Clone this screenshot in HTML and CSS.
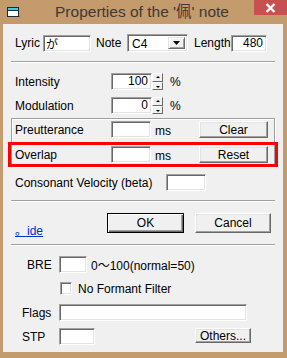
FILE: index.html
```html
<!DOCTYPE html>
<html lang="en">
<head>
  <meta charset="UTF-8" />
  <title>Properties of the note</title>
  <link rel="stylesheet" href="styles.css">
</head>
<body>
  <div class="window">
    <div class="titlebar">
      <svg class="app-icon" width="13" height="11" viewBox="0 0 13 11">
        <rect x="0.5" y="0.5" width="11" height="9" fill="#fff" stroke="#1a2a3a"/>
        <rect x="1" y="1" width="10" height="2.5" fill="#3fd0e0"/>
        <line x1="1" y1="3.5" x2="11" y2="3.5" stroke="#1a2a3a"/>
        <rect x="12" y="9" width="1" height="1" fill="#6a7a8a"/>
      </svg>
      <div class="title">Properties of the '佩' note</div>
      <div class="close">
        <svg width="11" height="10" viewBox="0 0 11 10">
          <path d="M1.5 1 L9.5 9 M9.5 1 L1.5 9" stroke="#fff" stroke-width="2.4"/>
        </svg>
      </div>
    </div>

    <div class="client">
      <div class="row row-top">
        <span class="lbl w-lyric">Lyric</span>
        <span class="field w48 lyric">が</span>
        <span class="lbl w-note">Note</span>
        <span class="combo">
          <span class="combo-text">C4</span>
          <span class="combo-btn">
            <svg width="7" height="4" viewBox="0 0 7 4"><path d="M0 0 H7 L3.5 4 Z" fill="#000"/></svg>
          </span>
        </span>
        <span class="lbl w-length">Length</span>
        <span class="field w36 num">480</span>
      </div>

      <div class="sep sep-a"></div>

      <div class="row row-int">
        <span class="lbl w96">Intensity</span>
        <span class="field w41 num">100</span>
        <span class="spin"><span class="spin-up"></span><span class="spin-down"></span></span>
        <span class="unit pct">%</span>
      </div>
      <div class="row row-mod">
        <span class="lbl w96">Modulation</span>
        <span class="field w41 num">0</span>
        <span class="spin"><span class="spin-up"></span><span class="spin-down"></span></span>
        <span class="unit pct">%</span>
      </div>

      <div class="group">
        <div class="row row-pre">
          <span class="lbl w96">Preutterance</span>
          <span class="field w40"></span>
          <span class="unit ms">ms</span>
          <span class="btn w69">Clear</span>
        </div>
        <div class="row row-ovl highlight">
          <span class="lbl w96">Overlap</span>
          <span class="field w40"></span>
          <span class="unit ms">ms</span>
          <span class="btn w69">Reset</span>
        </div>
      </div>

      <div class="row row-cons">
        <span class="lbl w151">Consonant Velocity (beta)</span>
        <span class="field w40"></span>
      </div>

      <div class="sep sep-b"></div>

      <div class="row row-actions">
        <a class="link" href="#">。ide</a>
        <span class="btn btn-lg default">OK</span>
        <span class="btn btn-lg cancel">Cancel</span>
      </div>

      <div class="sep sep-c"></div>

      <div class="extras">
        <span class="lbl ex-bre">BRE</span>
        <div class="ex-line">
          <span class="field w28"></span>
          <span class="hint">0〜100(normal=50)</span>
        </div>

        <span></span>
        <div class="ex-line ex-check">
          <span class="checkbox"></span>
          <span class="lbl">No Formant Filter</span>
        </div>

        <span class="lbl ex-flags">Flags</span>
        <div class="ex-line">
          <span class="field w188"></span>
        </div>

        <span class="lbl ex-stp">STP</span>
        <div class="ex-line ex-stp-line">
          <span class="field w36"></span>
          <span class="btn btn-sm">Others...</span>
        </div>
      </div>
    </div>
  </div>
</body>
</html>
```

FILE: styles.css
```css
* {
  box-sizing: border-box;
}
body {
  margin: 0;
  font-family: "Liberation Sans", Arial, "Noto Sans CJK JP", sans-serif;
  font-size: 12px;
  color: #000;
  background: #c49b6c;
}
.window {
  width: 287px;
  height: 358px;
  background: #c49b6c;
  padding: 0 4px 0 3px;
  display: flex;
  flex-direction: column;
}
.titlebar {
  height: 24px;
  margin: 0 -4px 0 -3px;
  display: grid;
  grid-template-columns: 1fr auto 1fr;
  align-items: start;
}
.app-icon {
  margin: 7px 0 0 7px;
}
.title {
  font-size: 15.5px;
  color: #3a3a3a;
  line-height: 24px;
  margin-left: -3px;
}
.close {
  justify-self: end;
  width: 33px;
  height: 15px;
  background: #c75050;
  display: flex;
  align-items: center;
  justify-content: center;
}
.client {
  background: #f0f0f0;
  height: 328px;
  padding: 10px 8px 0 8px;
}

/* rows */
.row {
  display: flex;
  align-items: center;
  height: 17px;
  padding-left: 4px;
}
.row-top {
  height: 18px;
}
.lbl {
  white-space: nowrap;
}
.w-lyric { width: 28px; }
.w-note { width: 31px; margin-left: 5px; }
.w-length { width: 37px; margin-left: 6px; }
.w96 { width: 96px; }
.w151 { width: 151px; }

/* sunken field */
.field {
  display: inline-block;
  height: 17px;
  background: #fff;
  border: 1px solid;
  border-color: #a0a0a0 #fff #fff #a0a0a0;
  box-shadow: inset 1px 1px #696969, inset -1px -1px #e3e3e3;
  padding: 0 3px;
  line-height: 15px;
  font-size: 12px;
}
.lyric {
  font-family: "Noto Sans CJK JP", sans-serif;
  padding-left: 2px;
}
.num {
  text-align: right;
}
.w48 { width: 48px; }
.w41 { width: 41px; }
.w40 { width: 40px; }
.w36 { width: 36px; }
.w28 { width: 28px; }
.w188 { width: 188px; }

.combo {
  display: flex;
  width: 61px;
  height: 18px;
  background: #fff;
  border: 1px solid;
  border-color: #a0a0a0 #fff #fff #a0a0a0;
  box-shadow: inset 1px 1px #696969, inset -1px -1px #e3e3e3;
  padding: 2px;
}
.combo-text {
  flex: 1;
  line-height: 14px;
  padding-left: 2px;
}
.combo-btn {
  width: 17px;
  background: #f0f0f0;
  border: 1px solid;
  border-color: #e3e3e3 #696969 #696969 #e3e3e3;
  box-shadow: inset 1px 1px #fff, inset -1px -1px #a0a0a0;
  display: flex;
  align-items: center;
  justify-content: center;
}

/* spinner */
.spin {
  display: flex;
  flex-direction: column;
  width: 11px;
  height: 17px;
}
.spin-up, .spin-down {
  flex: 1;
  background: #f0f0f0;
  border: 1px solid;
  border-color: #fff #696969 #696969 #fff;
  position: relative;
}
.spin-up::after, .spin-down::after {
  content: "";
  position: absolute;
  left: 3px;
  border-left: 2px solid transparent;
  border-right: 2px solid transparent;
}
.spin-up::after {
  top: 2px;
  border-bottom: 2px solid #000;
}
.spin-down::after {
  top: 3px;
  border-top: 2px solid #000;
}
.unit.pct {
  margin-left: 7px;
}
.unit.ms {
  margin-left: 4px;
  padding-top: 3px;
}

/* separators */
.sep {
  height: 2px;
  border-top: 1px solid #a0a0a0;
  border-bottom: 1px solid #fff;
}
.sep-a { margin-top: 9px; }
.sep-b { margin-top: 9px; }
.sep-c { margin-top: 7px; }

.row-int { margin-top: 10px; }
.row-mod { margin-top: 7px; }

/* group box */
.group {
  margin-top: 4px;
  height: 49px;
  border: 1px solid #a0a0a0;
  box-shadow: inset 1px 1px #fff, 1px 1px #fff;
  padding: 2px 6px 0 3px;
}
.group .row {
  padding-left: 0;
}
.row-ovl {
  margin-top: 8px;
}
.highlight {
  outline: 3px solid #f00;
  outline-offset: 1px;
  margin-left: -3px;
  margin-right: -6px;
  padding-left: 3px !important;
  padding-right: 6px;
}
.row-cons { margin-top: 7px; }

/* buttons */
.btn {
  display: inline-flex;
  align-items: center;
  justify-content: center;
  height: 17px;
  background: #f0f0f0;
  border: 1px solid;
  border-color: #fff #696969 #696969 #fff;
  box-shadow: inset -1px -1px #a0a0a0, inset 1px 1px #e3e3e3;
  font-size: 12px;
}
.w69 {
  width: 69px;
  margin-left: auto;
}
.row-actions {
  height: 24px;
  margin-top: 11px;
  align-items: flex-start;
  padding-right: 4px;
}
.link {
  align-self: flex-end;
  color: #0033cc;
  text-decoration: underline;
  font-family: "Liberation Sans", "Noto Sans CJK JP", sans-serif;
  line-height: 12px;
}
.btn-lg {
  height: 20px;
}
.default {
  width: 77px;
  margin-left: auto;
  border-color: #000;
  box-shadow: inset 1px 1px #fff, inset -1px -1px #696969, inset -2px -2px #a0a0a0;
}
.cancel {
  width: 76px;
  margin-left: 11px;
}

/* extras */
.extras {
  display: grid;
  grid-template-columns: 48px 1fr;
  grid-auto-rows: 17px;
  row-gap: 7px;
  align-items: center;
  margin-top: 10px;
}
.ex-line {
  display: flex;
  align-items: center;
  height: 17px;
}
.ex-bre { padding-left: 16px; }
.ex-flags { padding-left: 11px; }
.ex-stp { padding-left: 11px; }
.hint {
  margin-left: 4px;
}
.ex-check {
  padding-left: 1px;
}
.checkbox {
  width: 12px;
  height: 13px;
  background: #fff;
  border: 1px solid;
  border-color: #a0a0a0 #fff #fff #a0a0a0;
  box-shadow: inset 1px 1px #696969, inset -1px -1px #e3e3e3;
  margin-right: 6px;
}
.btn-sm {
  width: 56px;
  height: 15px;
  margin-left: 100px;
  align-self: flex-start;
}
```
